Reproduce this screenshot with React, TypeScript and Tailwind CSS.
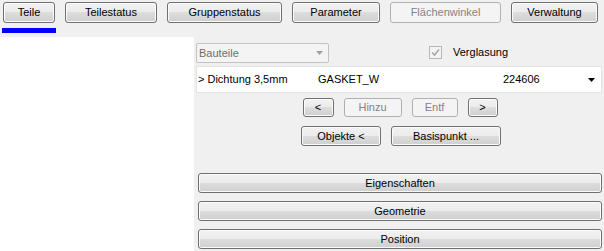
import React from "react";

// Classic Win7-ish push button. Width is fixed per caption.
function Btn({
  label,
  w,
  h = 20,
  disabled = false,
  className = "",
}: {
  label: string;
  w?: string;
  h?: number;
  disabled?: boolean;
  className?: string;
}) {
  const base =
    "flex items-center justify-center rounded-[3px] border text-[11px] leading-none select-none";
  const look = disabled
    ? "border-[#adb2b5] bg-[#f4f4f4] text-[#838383]"
    : "border-[#707070] bg-[linear-gradient(#f2f2f2,#ebebeb_50%,#dddddd_50%,#cfcfcf)] text-black shadow-[inset_0_0_0_1px_#fbfbfb]";
  return (
    <div className={`${base} ${look} ${w ?? ""} ${className}`} style={{ height: h }}>
      {label}
    </div>
  );
}

// Tiny disabled checkbox with greyed tick.
function CheckMark() {
  return (
    <div className="w-[13px] h-[13px] border border-[#b7b7b7] bg-[#f4f4f4] flex items-center justify-center">
      <svg width="9" height="9" viewBox="0 0 9 9">
        <path d="M1 4.5 L3.5 7 L8 1.5" fill="none" stroke="#a8a8a8" strokeWidth="1.6" />
      </svg>
    </div>
  );
}

export default function App() {
  return (
    <div
      className="w-[604px] h-[251px] bg-[#f0f0f0] overflow-hidden flex flex-col"
      style={{ fontFamily: '"Liberation Sans", Arial, sans-serif' }}
    >
      {/* === Tab buttons ================================================ */}
      <div className="flex gap-[10px] pl-[3px] pt-[2px]">
        <Btn label="Teile" w="w-[52px]" h={21} />
        <Btn label="Teilestatus" w="w-[92px]" h={21} />
        <Btn label="Gruppenstatus" w="w-[115px]" h={21} />
        <Btn label="Parameter" w="w-[88px]" h={21} />
        <Btn label="Flächenwinkel" w="w-[111px]" h={21} disabled />
        <Btn label="Verwaltung" w="w-[87px]" h={21} />
      </div>
      {/* active tab marker */}
      <div className="ml-[2px] mt-[5px] w-[54px] h-[5px] bg-[#0000ff]" />

      <div className="flex flex-1 mt-[4px]">
        {/* empty tree / list area */}
        <div className="w-[194px] bg-white" />

        {/* right side form */}
        <div className="flex-1 flex flex-col pl-[2px] pr-[2px] pt-[6px]">
          <div className="flex items-center h-[20px]">
            <div className="w-[133px] h-[20px] rounded-[2px] border border-[#c3c3c3] bg-[#f4f4f4] flex items-center justify-between pl-[2px] pr-[5px] text-[11px] text-[#6d6d6d]">
              <span>Bauteile</span>
              <svg width="7" height="4" viewBox="0 0 7 4">
                <path d="M0 0 H7 L3.5 4 Z" fill="#a0a0a0" />
              </svg>
            </div>
            <div className="ml-[100px] flex items-center gap-[11px] -mt-[2px]">
              <CheckMark />
              <span className="text-[11px] text-black">Verglasung</span>
            </div>
          </div>

          <div className="mt-[3px] h-[27px] bg-white border border-[#e3e3e3] flex items-center text-[11px] text-black pr-[6px]">
            <span className="w-[121px] pl-[1px]">&gt; Dichtung 3,5mm</span>
            <span className="w-[185px]">GASKET_W</span>
            <span className="flex-1">224606</span>
            <svg width="7" height="4" viewBox="0 0 7 4">
              <path d="M0 0 H7 L3.5 4 Z" fill="#000" />
            </svg>
          </div>

          <div className="mt-[5px] flex justify-center gap-[10px] pl-[2px]">
            <Btn label="<" w="w-[31px]" h={19} />
            <Btn label="Hinzu" w="w-[58px]" h={19} disabled />
            <Btn label="Entf" w="w-[46px]" h={19} disabled />
            <Btn label=">" w="w-[30px]" h={19} />
          </div>

          <div className="mt-[9px] flex justify-center gap-[10px] pl-[4px]">
            <Btn label="Objekte <" w="w-[80px]" h={20} />
            <Btn label="Basispunkt ..." w="w-[110px]" h={20} />
          </div>

          <div className="mt-[27px] ml-[2px] flex flex-col gap-[8px]">
            <Btn label="Eigenschaften" h={20} />
            <Btn label="Geometrie" h={20} />
            <Btn label="Position" h={20} />
          </div>
        </div>
      </div>
    </div>
  );
}
